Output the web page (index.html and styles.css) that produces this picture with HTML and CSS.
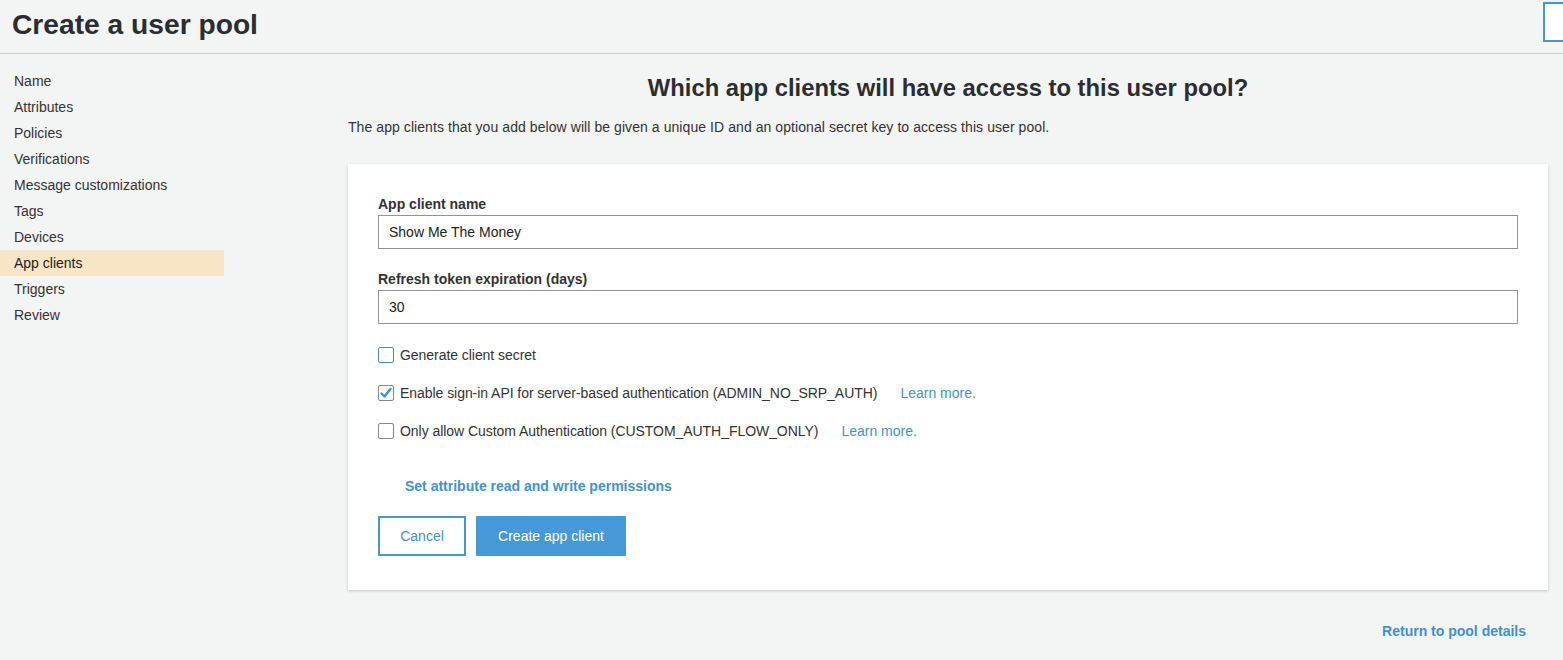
FILE: index.html
```html
<!DOCTYPE html>
<html>
<head>
<meta charset="utf-8">
<link rel="stylesheet" href="styles.css">
</head>
<body>
<header class="topbar">
  <h1 class="title">Create a user pool</h1>
  <div class="corner-btn"></div>
</header>
<div class="layout">
  <nav class="sidebar">
    <a class="nav-item">Name</a>
    <a class="nav-item">Attributes</a>
    <a class="nav-item">Policies</a>
    <a class="nav-item">Verifications</a>
    <a class="nav-item">Message customizations</a>
    <a class="nav-item">Tags</a>
    <a class="nav-item">Devices</a>
    <a class="nav-item active">App clients</a>
    <a class="nav-item">Triggers</a>
    <a class="nav-item">Review</a>
  </nav>
  <main class="main">
    <h2 class="heading">Which app clients will have access to this user pool?</h2>
    <p class="desc">The app clients that you add below will be given a unique ID and an optional secret key to access this user pool.</p>
    <section class="card">
      <label class="label">App client name</label>
      <div class="input">Show Me The Money</div>
      <label class="label">Refresh token expiration (days)</label>
      <div class="input">30</div>
      <div class="checks">
        <div class="check-row">
          <span class="box box-blue"></span>
          <span class="check-text">Generate client secret</span>
        </div>
        <div class="check-row">
          <span class="box">
            <svg width="14" height="14" viewBox="0 0 14 14"><path d="M2.5 7.5 L5.5 10.5 L11.5 3" fill="none" stroke="#3f8fd0" stroke-width="2.4" stroke-linecap="round" stroke-linejoin="round"/></svg>
          </span>
          <span class="check-text">Enable sign-in API for server-based authentication (ADMIN_NO_SRP_AUTH)</span>
          <a class="learn">Learn more.</a>
        </div>
        <div class="check-row">
          <span class="box"></span>
          <span class="check-text">Only allow Custom Authentication (CUSTOM_AUTH_FLOW_ONLY)</span>
          <a class="learn">Learn more.</a>
        </div>
      </div>
      <a class="perm-link">Set attribute read and write permissions</a>
      <div class="buttons">
        <button class="btn btn-cancel">Cancel</button>
        <button class="btn btn-primary">Create app client</button>
      </div>
    </section>
    <div class="footer">
      <a class="return-link">Return to pool details</a>
    </div>
  </main>
</div>
</body>
</html>
```

FILE: styles.css
```css
* { box-sizing: border-box; }
html, body { margin: 0; padding: 0; }
body {
  background: #f3f4f4;
  font-family: "Liberation Sans", Arial, sans-serif;
  color: #333;
  width: 1563px;
  height: 660px;
  overflow: hidden;
}
.topbar {
  height: 54px;
  border-bottom: 1px solid #ccc;
  display: flex;
  justify-content: space-between;
  align-items: flex-start;
}
.title {
  margin: 0;
  padding: 6px 0 0 12px;
  font-size: 28.2px;
  font-weight: bold;
  color: #2b2e30;
  line-height: 36px;
}
.corner-btn {
  width: 20px;
  height: 40px;
  margin-top: 2px;
  border: 2px solid #4496d8;
  border-right: none;
  background: #fff;
}
.layout {
  display: flex;
}
.sidebar {
  width: 224px;
  padding-top: 14px;
  display: flex;
  flex-direction: column;
}
.nav-item {
  display: block;
  height: 26px;
  line-height: 26px;
  padding-left: 14px;
  font-size: 14px;
  color: #333;
}
.nav-item.active {
  background: #f8e5c6;
  color: #222;
}
.main {
  margin-left: 124px;
  width: 1200px;
  display: flex;
  flex-direction: column;
}
.heading {
  margin: 20px 0 0;
  text-align: center;
  font-size: 23.8px;
  line-height: 28px;
  font-weight: bold;
  color: #2b2e30;
}
.desc {
  margin: 15px 0 0;
  font-size: 14px;
  line-height: 20px;
  letter-spacing: 0.07px;
  color: #333;
}
.card {
  margin-top: 27px;
  background: #fff;
  box-shadow: 0 1px 3px rgba(0,0,0,0.18);
  height: 426px;
  padding: 31px 30px 0 30px;
  display: flex;
  flex-direction: column;
}
.label {
  font-size: 14px;
  font-weight: bold;
  line-height: 18px;
  color: #333;
}
.input {
  margin-top: 2px;
  height: 34px;
  border: 1px solid #8e9494;
  padding: 0 10px;
  line-height: 32px;
  font-size: 14px;
  color: #222;
  margin-bottom: 21px;
}
.checks {
  display: flex;
  flex-direction: column;
  gap: 22px;
  margin-top: 2px;
}
.check-row {
  display: flex;
  align-items: center;
  height: 16px;
  font-size: 14px;
}
.box {
  width: 16px;
  height: 16px;
  border: 1px solid #888;
  border-radius: 2px;
  background: #fff;
  display: flex;
  align-items: center;
  justify-content: center;
  margin-right: 6px;
  flex-shrink: 0;
}
.box-blue { border-color: #3f8fd0; }
.check-text { color: #333; letter-spacing: -0.05px; }
.learn {
  margin-left: 23px;
  color: #3f91d4;
}
.perm-link {
  margin: 38px 0 0 27px;
  font-size: 14px;
  font-weight: bold;
  color: #3f91d4;
  line-height: 18px;
}
.buttons {
  margin-top: 21px;
  display: flex;
  gap: 10px;
}
.btn {
  height: 40px;
  font-family: "Liberation Sans", Arial, sans-serif;
  font-size: 14px;
  border-radius: 1px;
  cursor: pointer;
}
.btn-cancel {
  width: 88px;
  background: #fff;
  border: 2px solid #4496d8;
  color: #3f91d4;
}
.btn-primary {
  width: 150px;
  background: #4499d6;
  border: none;
  color: #fff;
}
.footer {
  display: flex;
  justify-content: flex-end;
  padding-right: 22px;
  margin-top: 32px;
}
.return-link {
  font-size: 14px;
  font-weight: bold;
  color: #3f91d4;
  line-height: 18px;
}
```
